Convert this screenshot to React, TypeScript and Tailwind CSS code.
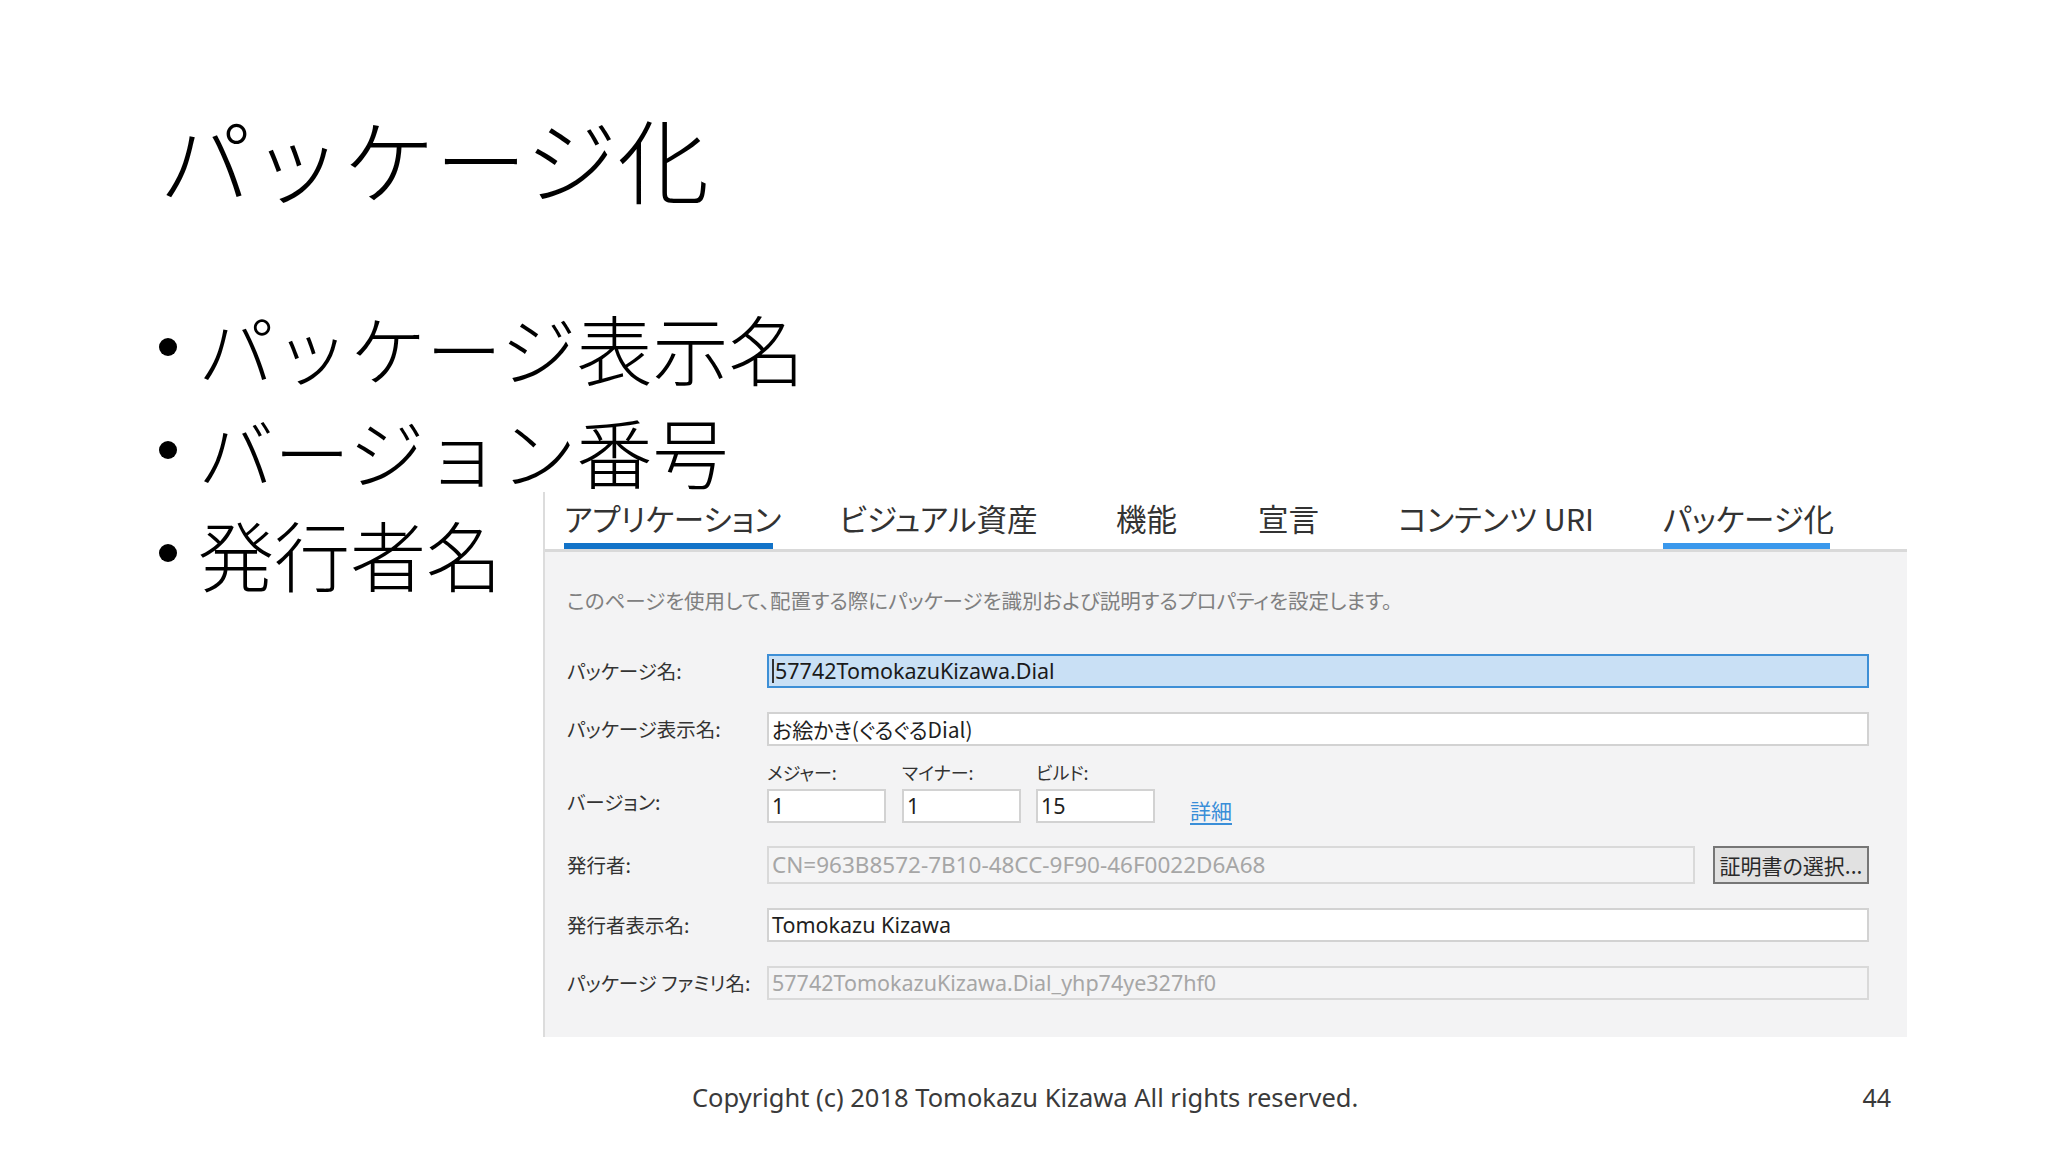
import React from "react";

const JP = "font-['Noto_Sans_CJK_JP','Noto_Sans',sans-serif] [font-feature-settings:'palt']";
const SLIDE = "font-['Noto_Sans_CJK_JP','Noto_Sans',sans-serif]";
const LATIN = "font-['Noto_Sans','Noto_Sans_CJK_JP',sans-serif]";

type FieldKind = "normal" | "selected" | "disabled";

const Field = ({value, kind = "normal", className = ""}: {value: string; kind?: FieldKind; className?: string}) => {
  const look =
    kind === "selected"
      ? "bg-[#c9e0f5] border-[#3d8fd6] text-[#1a1a1a]"
      : kind === "disabled"
        ? "bg-[#f4f4f5] border-[#d9d9d9] text-[#a6a6a6]"
        : "bg-white border-[#d2d2d2] text-[#1f1f1f]";
  return (
    <div className={`flex h-[34px] items-center border-2 pl-[3px] ${look} ${className}`}>
      {kind === "selected" && <span className="mr-px h-[24px] w-[2px] bg-[#333]" />}
      <span className={`${LATIN} text-[21.5px] leading-none whitespace-nowrap`}>{value}</span>
    </div>
  );
};

const Label = ({children}: {children: React.ReactNode}) => (
  <div className={`${JP} flex items-center text-[19.5px] text-[#333] whitespace-nowrap`}>{children}</div>
);

const tabs = [
  {name: "アプリケーション", w: "w-[209px]", ml: "ml-[19px]", active: "bg-[#1273c8]"},
  {name: "ビジュアル資産", w: "w-[207px]", ml: "ml-[66px]", active: ""},
  {name: "機能", w: "w-[71px]", ml: "ml-[70px]", active: ""},
  {name: "宣言", w: "w-[67px]", ml: "ml-[71px]", active: ""},
  {name: "コンテンツ URI", w: "w-[196px]", ml: "ml-[73px]", active: ""},
  {name: "パッケージ化", w: "w-[167px]", ml: "ml-[69px]", active: "bg-[#3a98ec]"},
];

const ManifestPanel = () => (
  <div className="absolute left-[543px] top-[492px] flex h-[545px] w-[1364px] flex-col border-l-2 border-[#dcdcdc]">
    {/* tab strip */}
    <div className="flex h-[57px] items-end bg-white">
      {tabs.map((t) => (
        <div key={t.name} className={`flex flex-col ${t.w} ${t.ml}`}>
          <span className={`${JP} text-[30.5px] leading-none text-[#333] whitespace-nowrap`}>{t.name}</span>
          <div className={`mt-[10px] h-[6px] ${t.active}`} />
        </div>
      ))}
    </div>
    <div className="h-[3px] bg-[#d9d9d9]" />

    {/* page body */}
    <div className="flex flex-1 flex-col bg-[#f3f3f4] pl-[22px] pr-[38px]">
      <div className={`${JP} mt-[31px] flex h-[34px] items-center text-[20.5px] text-[#808080] whitespace-nowrap`}>
        このページを使用して、配置する際にパッケージを識別および説明するプロパティを設定します。
      </div>

      <div className="grid grid-cols-[200px_1fr]">
        <div className="mt-[37px] flex">
          <Label>パッケージ名:</Label>
        </div>
        <Field kind="selected" value="57742TomokazuKizawa.Dial" className="mt-[37px]" />

        <div className="mt-[24px] flex">
          <Label>パッケージ表示名:</Label>
        </div>
        <div className="mt-[24px]">
          <div className="flex h-[34px] items-center border-2 border-[#d2d2d2] bg-white pl-[3px]">
            <span className={`${JP} text-[21px] leading-none text-[#1f1f1f] whitespace-nowrap`}>お絵かき(ぐるぐるDial)</span>
          </div>
        </div>

        <div className="flex items-end">
          <div className="mb-[4px] flex h-[34px] items-center">
            <Label>バージョン:</Label>
          </div>
        </div>
        <div className="flex items-end">
          {[
            {label: "メジャー:", value: "1", ml: ""},
            {label: "マイナー:", value: "1", ml: "ml-[16px]"},
            {label: "ビルド:", value: "15", ml: "ml-[15px]"},
          ].map((v) => (
            <div key={v.label} className={`flex w-[119px] flex-col ${v.ml}`}>
              <div className={`${JP} mt-[13px] flex h-[26px] items-center text-[18px] text-[#333]`}>{v.label}</div>
              <Field value={v.value} className="mt-[4px]" />
            </div>
          ))}
          <span className={`${JP} mb-[-2px] ml-[35px] text-[21px] leading-[30px] text-[#3a8ed8] underline underline-offset-4`}>
            詳細
          </span>
        </div>

        <div className="mt-[23px] flex h-[38px]">
          <Label>発行者:</Label>
        </div>
        <div className="mt-[23px] flex h-[38px]">
          <div className="flex flex-1 items-center border-2 border-[#d9d9d9] bg-[#f4f4f5] pl-[3px]">
            <span className={`${LATIN} text-[22.5px] leading-none text-[#a6a6a6] whitespace-nowrap`}>
              CN=963B8572-7B10-48CC-9F90-46F0022D6A68
            </span>
          </div>
          <div className="ml-[18px] flex w-[156px] items-center justify-center border-2 border-[#767676] bg-[#e1e1e1]">
            <span className={`${JP} text-[21px] leading-none text-[#2a2a2a] whitespace-nowrap`}>証明書の選択...</span>
          </div>
        </div>

        <div className="mt-[24px] flex">
          <Label>発行者表示名:</Label>
        </div>
        <Field value="Tomokazu Kizawa" className="mt-[24px]" />

        <div className="mt-[24px] flex">
          <Label>パッケージ ファミリ名:</Label>
        </div>
        <Field kind="disabled" value="57742TomokazuKizawa.Dial_yhp74ye327hf0" className="mt-[24px]" />
      </div>
    </div>
  </div>
);

const bullets = ["パッケージ表示名", "バージョン番号", "発行者名"];

export default function App() {
  return (
    <div className="relative flex h-[1152px] w-[2048px] flex-col overflow-hidden bg-white">
      <div className="pl-[159px] pt-[111px]">
        <h1 className={`${SLIDE} text-[92px] leading-[92px] font-light text-black`}>パッケージ化</h1>
        <ul className="mt-[92px]">
          {bullets.map((b) => (
            <li key={b} className="flex h-[103px] items-center">
              <span className="h-[18px] w-[18px] rounded-full bg-black" />
              <span className={`${SLIDE} ml-[21px] text-[76px] leading-none font-light text-black whitespace-nowrap`}>{b}</span>
            </li>
          ))}
        </ul>
      </div>

      <ManifestPanel />

      <div className="mt-auto mb-[42px] flex items-center pl-[692px] pr-[157px]">
        <span className={`${LATIN} flex-1 text-[25.5px] leading-none text-[#3a3a3a]`}>
          Copyright (c) 2018 Tomokazu Kizawa All rights reserved.
        </span>
        <span className={`${LATIN} text-[25px] leading-none text-[#3a3a3a]`}>44</span>
      </div>
    </div>
  );
}
